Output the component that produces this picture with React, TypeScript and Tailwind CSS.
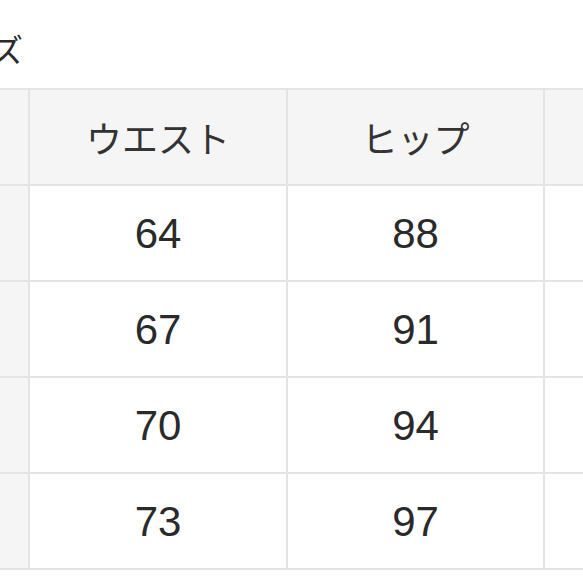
const rows = [
  ['64', '88'],
  ['67', '91'],
  ['70', '94'],
  ['73', '97'],
];

export default function App() {
  return (
    <div className="w-[583px] h-[583px] overflow-hidden bg-white text-[#2a2a2a]">
      {/* title, cut off on the left */}
      <div className="h-[88px] pt-[32px] overflow-hidden">
        <div className="ml-[-72px] whitespace-nowrap text-[32px] leading-[32px] font-['Noto_Sans_CJK_JP',sans-serif]">
          サイズ
        </div>
      </div>

      <div className="grid grid-cols-[30px_258px_257px_1fr] border-t-2 border-[#e4e4e4]">
        {/* header */}
        <div className="h-[96px] bg-[#f5f5f5] border-r-2 border-b-2 border-[#e4e4e4]" />
        <div className="h-[96px] bg-[#f5f5f5] border-r-2 border-b-2 border-[#e4e4e4] flex items-center justify-center text-[36px] text-[#333] font-['Noto_Sans_CJK_JP',sans-serif]">
          ウエスト
        </div>
        <div className="h-[96px] bg-[#f5f5f5] border-r-2 border-b-2 border-[#e4e4e4] flex items-center justify-center text-[36px] text-[#333] font-['Noto_Sans_CJK_JP',sans-serif]">
          ヒップ
        </div>
        <div className="h-[96px] bg-[#f5f5f5] border-b-2 border-[#e4e4e4]" />

        {rows.map(([w, h]) => (
          <div key={w} className="contents">
            <div className="h-[96px] bg-[#f5f5f5] border-r-2 border-b-2 border-[#e4e4e4]" />
            <div className="h-[96px] border-r-2 border-b-2 border-[#e4e4e4] flex items-center justify-center text-[42px] font-['Liberation_Sans',Arial,sans-serif]">
              {w}
            </div>
            <div className="h-[96px] border-r-2 border-b-2 border-[#e4e4e4] flex items-center justify-center text-[42px] font-['Liberation_Sans',Arial,sans-serif]">
              {h}
            </div>
            <div className="h-[96px] border-b-2 border-[#e4e4e4]" />
          </div>
        ))}
      </div>
    </div>
  );
}
